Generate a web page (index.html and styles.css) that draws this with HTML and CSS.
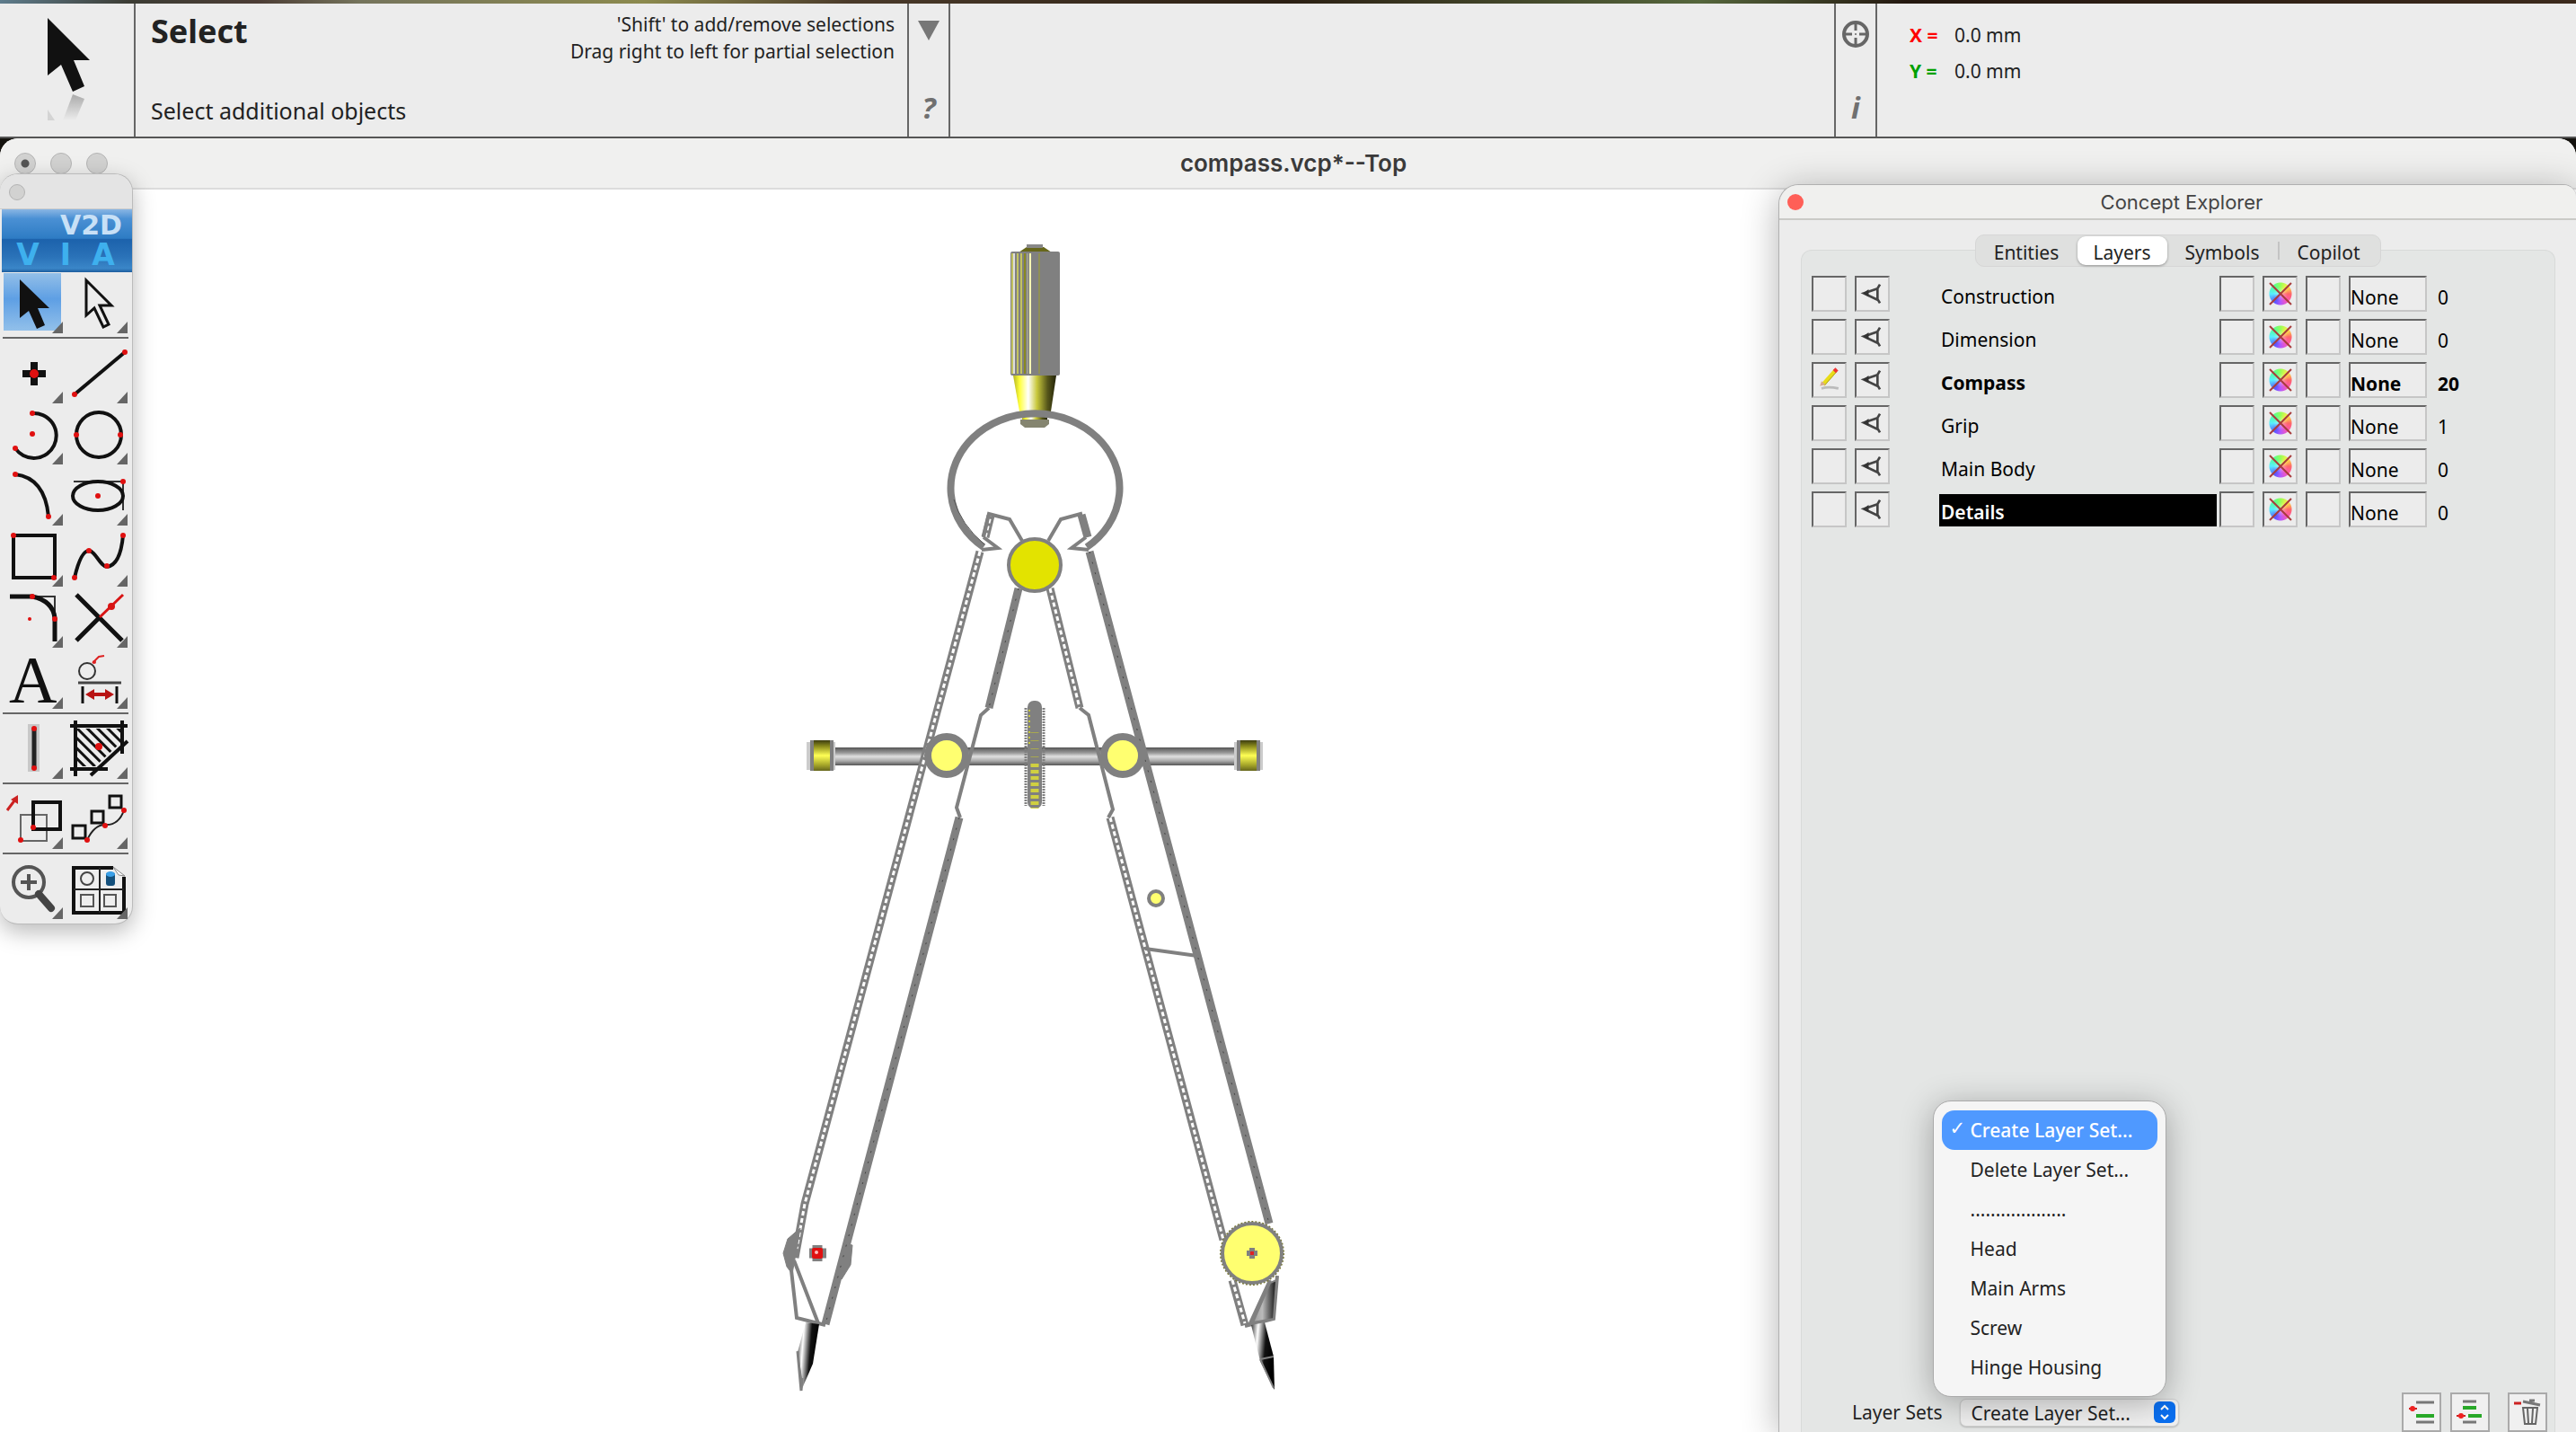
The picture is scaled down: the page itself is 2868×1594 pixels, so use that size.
FILE: index.html
```html
<!DOCTYPE html>
<html lang="en">
<head>
<meta charset="utf-8">
<title>compass.vcp*--Top</title>
<link rel="stylesheet" href="styles.css">
</head>
<body>
<svg class="defs" aria-hidden="true">
  <defs>
    <linearGradient id="ballBrass" x1="0" x2="1"><stop offset="0" stop-color="#b5b520"/><stop offset=".15" stop-color="#ffff3c"/><stop offset=".35" stop-color="#fff"/><stop offset=".55" stop-color="#c8c83c"/><stop offset=".8" stop-color="#55551a"/><stop offset="1" stop-color="#222208"/></linearGradient>
    <linearGradient id="rod" x1="0" y1="0" x2="0" y2="1"><stop offset="0" stop-color="#555"/><stop offset=".3" stop-color="#999"/><stop offset=".5" stop-color="#e0e0e0"/><stop offset=".75" stop-color="#aaa"/><stop offset="1" stop-color="#555"/></linearGradient>
    <linearGradient id="nut" x1="0" y1="0" x2="0" y2="1"><stop offset="0" stop-color="#3c3c10"/><stop offset=".2" stop-color="#8c8c1c"/><stop offset=".5" stop-color="#ffff55"/><stop offset=".8" stop-color="#a8a82a"/><stop offset="1" stop-color="#66661c"/></linearGradient>
    <linearGradient id="steel" x1="0" x2="1" y1="0" y2=".25"><stop offset="0" stop-color="#333"/><stop offset=".3" stop-color="#fff"/><stop offset=".5" stop-color="#777"/><stop offset=".65" stop-color="#111"/><stop offset="1" stop-color="#000"/></linearGradient>
    <linearGradient id="collar" x1="0" x2="1"><stop offset="0" stop-color="#999"/><stop offset=".4" stop-color="#bbb"/><stop offset="1" stop-color="#111"/></linearGradient>
    <linearGradient id="fade" x1="0" y1="0" x2="0" y2="1"><stop offset="0" stop-color="#aaa"/><stop offset="1" stop-color="#ececec"/></linearGradient>
    <linearGradient id="bluesel" x1="0" y1="0" x2="0" y2="1"><stop offset="0" stop-color="#93bfe8"/><stop offset=".45" stop-color="#5e9fe4"/><stop offset="1" stop-color="#92c0ea"/></linearGradient>
    <pattern id="hatch" width="8" height="8" patternUnits="userSpaceOnUse" patternTransform="rotate(-45)"><rect width="3" height="8" fill="#111"/></pattern>
    <symbol id="eye" viewBox="0 0 39 39"><path d="M29 8 26 13V26L29 31M26 13 9 19l17 8" fill="none" stroke="#444" stroke-width="3"/><path d="M8 19l7-5v9z" fill="#333"/></symbol>
    <symbol id="cross" viewBox="0 0 28 28"><path d="M2 2l24 24M26 2 2 26" stroke="#a83c3c" stroke-width="2" fill="none"/></symbol>
    <symbol id="more" viewBox="0 0 72 68"><path d="M70 55v13H58z" fill="#666"/></symbol>
  </defs>
</svg>

<header class="topbar">
  <div class="tool-picture">
    <svg width="150" height="148" viewBox="0 4 150 148" aria-hidden="true">
      <path d="M53 20v64l15-12 13 30 13-6-12-29h18z" fill="#111"/>
      <path d="M81 105l13 5-10 24H70z" fill="url(#fade)"/><path d="M53 122v12h8z" fill="#d4d4d4"/>
    </svg>
  </div>
  <div class="tool-info">
    <div class="tool-head">
      <h1>Select</h1>
      <p class="hints">'Shift' to add/remove selections<br>Drag right to left for partial selection</p>
    </div>
    <p class="prompt">Select additional objects</p>
  </div>
  <div class="bar-icons">
    <button aria-label="Options"><svg width="24" height="24" viewBox="0 0 24 24"><path d="M0 1h24L12 23z" fill="#777"/></svg></button>
    <button class="glyph" aria-label="Help">?</button>
  </div>
  <div class="spacer"></div>
  <div class="bar-icons">
    <button aria-label="Target"><svg width="32" height="32" viewBox="0 0 32 32"><circle cx="16" cy="16" r="13" fill="none" stroke="#666" stroke-width="4"/><path d="M16 3v9M16 20v9M3 16h9M20 16h9" stroke="#666" stroke-width="3"/><circle cx="16" cy="16" r="1" fill="#666"/></svg></button>
    <button class="glyph" aria-label="Information">i</button>
  </div>
  <dl class="coords">
    <dt class="x">X =</dt><dd>0.0 mm</dd>
    <dt class="y">Y =</dt><dd>0.0 mm</dd>
  </dl>
</header>

<main class="window">
  <div class="titlebar">
    <div class="lights"><i class="edited"></i><i></i><i></i></div>
    <h2>compass.vcp*--Top</h2>
  </div>
  <div class="canvas">
    <svg class="drawing" width="570" height="1300" viewBox="870 260 570 1300" role="img" aria-label="Compass drawing">
      <g fill="none" stroke="#808080">
        <!-- grip -->
        <g stroke="none">
          <path d="M1134 281l9-6h19l9 6z" fill="#66661a"/><rect x="1143" y="272" width="18" height="4" fill="#888"/>
          <rect x="1125" y="280" width="55" height="138" rx="2" fill="#808080"/>
          <path d="M1127 282v134M1133 282v134M1137 282v134" stroke="#c3c360" stroke-width="2"/>
          <path d="M1129 282v134" stroke="#ddd" stroke-width="2"/>
          <path d="M1141 282v134" stroke="#8a8a20" stroke-width="2"/>
          <path d="M1144 282v134" stroke="#b8b8a0"/>
          <path d="M1147 282v134" stroke="#ffffb4" stroke-width="2"/>
          <path d="M1157 282v134" stroke="#8f8f55" stroke-width="2"/>
          <path d="M1128 418h48l-6 40h-35z" fill="url(#ballBrass)"/>
          <path d="M1138 462h28v6h-28z" fill="url(#ballBrass)"/>
          <path d="M1136 467h32v5l-5 4h-22l-5-4z" fill="#858570"/>
        </g>
        <!-- ring -->
        <path d="M1095 609A94 83 0 1 1 1210 609" stroke-width="8"/>
        <path d="M1062 556q8 28 34 50" stroke="#555" stroke-width="1"/>
        <!-- spreader rod -->
        <rect x="930" y="832" width="445" height="20" fill="url(#rod)" stroke="none"/>
        <g stroke="none">
          <path d="M898 826h32v31h-32zM1374 826h32v31h-32z" fill="#ccc"/>
          <path d="M902 824h26v34h-26zM1377 824h26v34h-26z" fill="#808080"/>
          <path d="M906 824h18v34h-18z" fill="url(#nut)"/><path d="M1381 824h18v34h-18z" fill="url(#nut)"/>
        </g>
        <!-- hollow edges -->
        <g stroke-width="9"><path d="M1091 614 896 1340 885 1400M1169 655l33 133M1236 910 1362 1380M1372 1425l14 50M1097 598l6-24"/></g>
        <g stroke-width="3" stroke="#fff" stroke-dasharray="5 3"><path d="M1091 614 896 1340 887 1390M1169 655l33 133M1236 910 1362 1380M1372 1425l14 48M1097 598l6-24"/></g>
        <!-- solid edges -->
        <g stroke-width="9"><path d="M1134 655l-33 133M1068 910 919 1474M1213 614l200 748M1204 573l7 25"/></g>
        <g stroke="#444" stroke-width="1" stroke-dasharray="2 10"><path d="M1134 655l-33 133M1068 910 919 1474M1213 614l200 748"/></g>
        <g stroke-width="4">
          <path d="M1095 598l6-26 23 6 14 24M1095 598l16 12-18 2M1209 598l-6-26-22 6-14 24M1209 598l-16 12 19 2"/>
          <path d="M1101 788l-9 8-27 103 4 11M1202 788l10 8 27 105-5 9"/>
          <path d="M1275 1056l58 8"/>
          <path d="M884 1403l27 70M881 1414l6 53 32 8M1414 1425l-23 50M1422 1420l-4 48-32 8"/>
        </g>
        <path d="M891 1367l-14 12-5 16 4 15 6 8zM944 1385l5 1-2 22-10 16z" fill="#808080" stroke-width="1"/>
        <circle cx="1152" cy="629" r="29" fill="#e3e300" stroke-width="4"/>
        <g fill="#ffff70"><circle cx="1054" cy="841" r="21" stroke-width="8"/><circle cx="1250" cy="841" r="21" stroke-width="8"/>
          <circle cx="1287" cy="1000" r="8" stroke-width="4"/></g>
        <!-- thumb wheel -->
        <path d="M1142 788v109M1162 788v109" stroke-width="3" stroke-dasharray="2 1"/>
        <rect x="1144" y="780" width="16" height="120" rx="7" fill="#808080" stroke="none"/>
        <path d="M1146 790v40" stroke="#c8c83c" stroke-width="2" stroke-dasharray="2 4"/>
        <path d="M1152 815v40" stroke="#a8a850" stroke-width="9" stroke-dasharray="1 8"/>
        <path d="M1152 850v50" stroke="#d0d040" stroke-width="9" stroke-dasharray="4 3"/>
        <!-- pivots -->
        <circle cx="1394" cy="1395" r="35" stroke="#77772c" stroke-width="2" stroke-dasharray="2 2"/>
        <circle cx="1394" cy="1395" r="33" fill="#ffff70" stroke-width="4"/>
        <path d="M1388 1395h12M1394 1389v12" stroke-width="6"/><rect x="1392" y="1393" width="4" height="4" fill="#d22" stroke="none"/>
        <path d="M901 1395h19M910 1386v18" stroke-width="11"/><rect x="904" y="1389" width="12" height="12" rx="2" fill="#e01010" stroke="none"/><circle cx="909" cy="1394" r="2" fill="#fbb" stroke="none"/>
        <!-- points -->
        <path d="M1421 1425l-3 43-23 4 19-44z" fill="url(#collar)" stroke-width="2"/>
        <path d="M1393 1475l15-3 10 38 1 37-16-32z" fill="url(#steel)" stroke="none"/>
        <path d="M1403 1513l15-3M1403 1513l15 32" stroke-width="2"/>
        <path d="M897 1472l15 2-7 44-13 30-4-43z" fill="url(#steel)" stroke="none"/>
        <path d="M888 1504l4 44 1-14" fill="#808080" stroke-width="3"/>
      </g>
    </svg>
  </div>
</main>

<aside class="palette" aria-label="Tools">
  <div class="palette-bar"><i></i></div>
  <div class="logo"><div class="v2d">V2D</div><div class="via"><b>V</b><b>I</b><b>A</b></div></div>
  <div class="tools">
    <button aria-label="Select"><svg viewBox="0 0 72 68"><rect x="4" y="1" width="64" height="64" fill="url(#bluesel)"/><path d="M22 8v43l10-8 9 20 9-4-8-19h13z" fill="#111"/><use href="#more"/></svg></button>
    <button aria-label="Direct select"><svg viewBox="0 0 72 68"><path d="M24 9v39l9-8 10 21 6-3-10-21h13z" fill="none" stroke="#111" stroke-width="3"/><use href="#more"/></svg></button>
  </div>
  <hr>
  <div class="tools">
    <button aria-label="Point"><svg viewBox="0 0 72 68"><path d="M25 35h26M38 22v26" stroke="#111" stroke-width="8"/><circle cx="38" cy="35" r="5" fill="#e01010"/><use href="#more"/></svg></button>
    <button aria-label="Line"><svg viewBox="0 0 72 68"><path d="M11 58 67 11" stroke="#111" stroke-width="4"/><g fill="#e01010"><circle cx="11" cy="58" r="3"/><circle cx="67" cy="11" r="3"/></g><use href="#more"/></svg></button>
    <button aria-label="Arc"><svg viewBox="0 0 72 68"><path d="M36 11A25 25 0 1 1 17 50" fill="none" stroke="#111" stroke-width="4"/><g fill="#e01010"><circle cx="36" cy="11" r="3"/><circle cx="36" cy="34" r="3"/><circle cx="17" cy="50" r="3"/></g><use href="#more"/></svg></button>
    <button aria-label="Circle"><svg viewBox="0 0 72 68"><circle cx="38" cy="35" r="25" fill="none" stroke="#111" stroke-width="4"/><g fill="#e01010"><circle cx="13" cy="35" r="3"/><circle cx="62" cy="35" r="3"/></g><use href="#more"/></svg></button>
    <button aria-label="Quarter arc"><svg viewBox="0 0 72 68"><path d="M17 11q33 4 37 47" fill="none" stroke="#111" stroke-width="4"/><g fill="#e01010"><circle cx="17" cy="11" r="3"/><circle cx="54" cy="58" r="3"/></g><use href="#more"/></svg></button>
    <button aria-label="Ellipse"><svg viewBox="0 0 72 68"><path d="M10 19h55v32" fill="none" stroke="#333" stroke-width="2"/><ellipse cx="37" cy="35" rx="28" ry="16" fill="none" stroke="#111" stroke-width="4"/><g fill="#e01010"><circle cx="37" cy="35" r="3"/><circle cx="65" cy="19" r="3"/></g><use href="#more"/></svg></button>
    <button aria-label="Rectangle"><svg viewBox="0 0 72 68"><path d="M15 11h46v47H15z" fill="none" stroke="#111" stroke-width="4"/><g fill="#e01010"><circle cx="15" cy="11" r="3"/><circle cx="60" cy="58" r="3"/></g><use href="#more"/></svg></button>
    <button aria-label="Spline"><svg viewBox="0 0 72 68"><path d="M11 58Q18 28 27 28C34 28 40 46 47 46Q62 44 65 11" fill="none" stroke="#111" stroke-width="4"/><g fill="#e01010"><circle cx="11" cy="58" r="3"/><circle cx="27" cy="28" r="3"/><circle cx="47" cy="45" r="3"/><circle cx="65" cy="11" r="3"/></g><use href="#more"/></svg></button>
    <button aria-label="Fillet"><svg viewBox="0 0 72 68"><path d="M36 11h25v24" fill="none" stroke="#333" stroke-width="2"/><path d="M11 11h25q23 5 25 24v26" fill="none" stroke="#111" stroke-width="5"/><g fill="#e01010"><circle cx="36" cy="11" r="3"/><circle cx="33" cy="36" r="2"/><circle cx="61" cy="36" r="3"/></g><use href="#more"/></svg></button>
    <button aria-label="Trim"><svg viewBox="0 0 72 68"><path d="M13 9 64 60M13 60 38 35" stroke="#111" stroke-width="5"/><path d="M39 34 65 9" stroke="#d81414" stroke-width="3"/><circle cx="52" cy="22" r="4" fill="#d81414"/><use href="#more"/></svg></button>
    <button aria-label="Text"><svg viewBox="0 0 72 68"><text x="10" y="61" class="letter">A</text><use href="#more"/></svg></button>
    <button aria-label="Dimension"><svg viewBox="0 0 72 68"><circle cx="25" cy="26" r="9" fill="none" stroke="#333" stroke-width="2"/><path d="M31 17l7-7 6-1" fill="none" stroke="#d22" stroke-width="2"/><circle cx="33" cy="16" r="2" fill="#d22"/><path d="M15 39h48" stroke="#444" stroke-width="3"/><path d="M20 43v19M58 43v19" stroke="#111" stroke-width="3"/><path d="M23 52l10-6v4h12v-4l10 6-10 6v-4H33v4z" fill="#b81414"/><use href="#more"/></svg></button>
  </div>
  <hr>
  <div class="tools">
    <button aria-label="Thick line"><svg viewBox="0 0 72 68"><rect x="31" y="7" width="13" height="53" fill="#c8c8c8"/><path d="M38 12v44" stroke="#222" stroke-width="5"/><g fill="#e01010"><circle cx="38" cy="12" r="3"/><circle cx="38" cy="56" r="3"/></g><use href="#more"/></svg></button>
    <button aria-label="Hatch"><svg viewBox="0 0 72 68"><path d="M14 12h48v16L34 54H14z" fill="url(#hatch)"/><path d="M6 9h64M12 3v62M64 3v37M6 57h42M29 64 70 26" stroke="#111" stroke-width="4"/><circle cx="38" cy="32" r="4" fill="#e01010"/><use href="#more"/></svg></button>
  </div>
  <hr>
  <div class="tools">
    <button aria-label="Copy"><svg viewBox="0 0 72 68"><path d="M23 30h29v29H23z" fill="none" stroke="#666" stroke-width="2"/><path d="M37 16h30v30H37z" fill="none" stroke="#111" stroke-width="4"/><path d="M8 25 17 13" stroke="#c22" stroke-width="3"/><path d="M12 13l8-5v10z" fill="#c22"/><g fill="#e01010"><circle cx="37" cy="44" r="3"/><circle cx="23" cy="58" r="3"/></g><use href="#more"/></svg></button>
    <button aria-label="Copy along path"><svg viewBox="0 0 72 68"><path d="M25 58Q33 41 45 41Q60 42 66 25" fill="none" stroke="#222" stroke-width="2"/><path d="M9 42h14v14H9zM30 26h13v13H30zM50 9h13v13H50z" fill="none" stroke="#111" stroke-width="3"/><g fill="#e01010"><circle cx="25" cy="58" r="3"/><circle cx="45" cy="42" r="3"/><circle cx="66" cy="25" r="3"/></g><use href="#more"/></svg></button>
  </div>
  <hr>
  <div class="tools">
    <button aria-label="Zoom"><svg viewBox="0 0 72 68"><circle cx="32" cy="27" r="17" fill="none" stroke="#555" stroke-width="4"/><path d="M23 27h18M32 18v18" stroke="#555" stroke-width="4"/><path d="M43 40 57 56" stroke="#444" stroke-width="8" stroke-linecap="round"/><use href="#more"/></svg></button>
    <button aria-label="Symbols"><svg viewBox="0 0 72 68"><path d="M54 11H10v50h56V21" fill="#eee" stroke="#111" stroke-width="4"/><path d="M54 10l13 10-7-1z" fill="#fff" stroke="#888" stroke-width="1"/><path d="M39 11v50M10 35h56" stroke="#222" stroke-width="2"/><circle cx="25" cy="23" r="7" fill="none" stroke="#444" stroke-width="2"/><rect x="46" y="16" width="10" height="15" rx="3" fill="#14507c"/><ellipse cx="51" cy="18" rx="5" ry="3" fill="#3aa0e8"/><path d="M18 41h14v13H18zM44 41h13v13H44z" fill="none" stroke="#555" stroke-width="2"/><use href="#more"/></svg></button>
  </div>
</aside>

<section class="explorer" aria-label="Concept Explorer">
  <div class="explorer-bar"><button class="close" aria-label="Close"></button><h2>Concept Explorer</h2></div>
  <nav class="tabs" role="tablist">
    <button role="tab">Entities</button><button role="tab" class="active" aria-selected="true">Layers</button><button role="tab">Symbols</button><button role="tab" class="divided">Copilot</button>
  </nav>
  <div class="group">
    <table class="layers">
      <colgroup><col class="c"><col class="c"><col class="n"><col class="c"><col class="c"><col class="c"><col class="s"><col></colgroup>
      <tbody>
      <tr><td><button class="cell" aria-label="Active"></button></td><td><button class="cell" aria-label="Visible"><svg><use href="#eye"/></svg></button></td><td class="name"><span>Construction</span></td><td><button class="cell" aria-label="Lock"></button></td><td><button class="cell" aria-label="Color"><svg class="wheel"><use href="#cross"/></svg></button></td><td><button class="cell" aria-label="Pattern"></button></td><td><button class="cell style">None</button></td><td class="count">0</td></tr>
      <tr><td><button class="cell" aria-label="Active"></button></td><td><button class="cell" aria-label="Visible"><svg><use href="#eye"/></svg></button></td><td class="name"><span>Dimension</span></td><td><button class="cell" aria-label="Lock"></button></td><td><button class="cell" aria-label="Color"><svg class="wheel"><use href="#cross"/></svg></button></td><td><button class="cell" aria-label="Pattern"></button></td><td><button class="cell style">None</button></td><td class="count">0</td></tr>
      <tr class="current"><td><button class="cell" aria-label="Active"><svg viewBox="0 0 39 39"><path d="M10 30q8-3 21 0" stroke="#bbb" stroke-width="3" fill="none"/><path d="M12 25 27 8" stroke="#e8dc18" stroke-width="5"/><path d="M14 26 28 10" stroke="#a89a20" stroke-width="1"/><path d="M26 9l3-3" stroke="#e33" stroke-width="5"/><path d="M8 27l2-6 5 4z" fill="#d8a890"/></svg></button></td><td><button class="cell" aria-label="Visible"><svg><use href="#eye"/></svg></button></td><td class="name"><span>Compass</span></td><td><button class="cell" aria-label="Lock"></button></td><td><button class="cell" aria-label="Color"><svg class="wheel"><use href="#cross"/></svg></button></td><td><button class="cell" aria-label="Pattern"></button></td><td><button class="cell style">None</button></td><td class="count">20</td></tr>
      <tr><td><button class="cell" aria-label="Active"></button></td><td><button class="cell" aria-label="Visible"><svg><use href="#eye"/></svg></button></td><td class="name"><span>Grip</span></td><td><button class="cell" aria-label="Lock"></button></td><td><button class="cell" aria-label="Color"><svg class="wheel"><use href="#cross"/></svg></button></td><td><button class="cell" aria-label="Pattern"></button></td><td><button class="cell style">None</button></td><td class="count">1</td></tr>
      <tr><td><button class="cell" aria-label="Active"></button></td><td><button class="cell" aria-label="Visible"><svg><use href="#eye"/></svg></button></td><td class="name"><span>Main Body</span></td><td><button class="cell" aria-label="Lock"></button></td><td><button class="cell" aria-label="Color"><svg class="wheel"><use href="#cross"/></svg></button></td><td><button class="cell" aria-label="Pattern"></button></td><td><button class="cell style">None</button></td><td class="count">0</td></tr>
      <tr class="selected"><td><button class="cell" aria-label="Active"></button></td><td><button class="cell" aria-label="Visible"><svg><use href="#eye"/></svg></button></td><td class="name"><span>Details</span></td><td><button class="cell" aria-label="Lock"></button></td><td><button class="cell" aria-label="Color"><svg class="wheel"><use href="#cross"/></svg></button></td><td><button class="cell" aria-label="Pattern"></button></td><td><button class="cell style">None</button></td><td class="count">0</td></tr>
      </tbody>
    </table>
    <footer class="sets">
      <label for="layer-set">Layer Sets</label>
      <div class="picker">
        <select id="layer-set"><option>Create Layer Set...</option><option>Delete Layer Set...</option><option>Head</option><option>Main Arms</option><option>Screw</option><option>Hinge Housing</option></select>
        <svg class="arrows" width="24" height="24" viewBox="0 0 24 24" aria-hidden="true"><rect width="24" height="24" rx="6" fill="#0a6ff0"/><path d="M8 9l4-4 4 4M8 15l4 4 4-4" fill="none" stroke="#fff" stroke-width="2"/></svg>
        <ul class="menu">
          <li class="chosen"><button>Create Layer Set...</button></li><li><button>Delete Layer Set...</button></li><li><button>...................</button></li><li><button>Head</button></li><li><button>Main Arms</button></li><li><button>Screw</button></li><li><button>Hinge Housing</button></li>
        </ul>
      </div>
      <div class="actions">
        <button aria-label="New layer"><svg viewBox="0 0 40 40"><path d="M14 9h20M14 31h20" stroke="#777" stroke-width="3"/><path d="M14 24h20" stroke="#28a828" stroke-width="4"/><path d="M6 16h9" stroke="#c22" stroke-width="2"/><circle cx="10" cy="16" r="3" fill="#e22"/></svg></button>
        <button aria-label="New sublayer"><svg viewBox="0 0 40 40"><path d="M12 8h15M12 31h15" stroke="#777" stroke-width="3"/><path d="M12 15h15M18 24h15" stroke="#28a828" stroke-width="4"/><path d="M5 24h10" stroke="#c22" stroke-width="2"/><circle cx="10" cy="24" r="3" fill="#e22"/></svg></button>
        <button aria-label="Delete layer"><svg viewBox="0 0 40 40"><path d="M5 10h8" stroke="#c22" stroke-width="3"/><path d="M15 8l19 4M22 7l6 0" stroke="#777" stroke-width="3"/><path d="M15 15h16l-2 18H17zM20 16l1 16M26 16l-1 16" fill="none" stroke="#666" stroke-width="2"/></svg></button>
      </div>
    </footer>
  </div>
</section>
</body>
</html>
```
FILE: styles.css
```css
* { box-sizing: border-box; }
body {
  margin: 0;
  height: 100vh;
  overflow: hidden;
  display: flex;
  flex-direction: column;
  position: relative;
  padding-top: 4px;
  background: #14120e linear-gradient(90deg, #5e7c8c 0, #3c3c34 5%, #4c3d35 10%, #75745c 14%, #8c8a4e 25%, #4a3a2a 33%, #2c2014 50%, #55663c 66%, #241810 74%, #3c2a1c 100%) 0 0 / 100% 4px no-repeat;
  font-family: "Noto Sans", "Open Sans", sans-serif;
  font-size: 21px;
  color: #222;
}
h1, h2, p, dl, dd, ul { margin: 0; padding: 0; }
button { font: inherit; color: inherit; border: 0; padding: 0; background: none; }
svg { display: block; }
.defs { position: absolute; width: 0; height: 0; }

/* top information bar */
.topbar {
  display: flex;
  flex: none;
  height: 150px;
  background: #ececec;
  border-bottom: 2px solid #555;
}
.tool-picture { width: 151px; border-right: 2px solid #666; }
.tool-info {
  width: 861px;
  padding: 8px 14px 12px 17px;
  display: flex;
  flex-direction: column;
  justify-content: space-between;
  border-right: 2px solid #666;
}
.tool-head { display: flex; justify-content: space-between; }
.tool-head h1 { font-size: 36px; line-height: 46px; }
.hints { text-align: right; line-height: 30px; }
.prompt { font-size: 25px; line-height: 34px; }
.bar-icons {
  width: 46px;
  display: flex;
  flex-direction: column;
  align-items: center;
  justify-content: space-between;
  padding: 18px 0 12px;
  border-right: 2px solid #666;
}
.glyph { font: italic bold 33px/40px "Open Sans", sans-serif; color: #707070; }
.spacer { flex: 1; border-right: 2px solid #666; }
.coords {
  width: 778px;
  display: grid;
  grid-template-columns: 50px 1fr;
  grid-auto-rows: 40px;
  line-height: 40px;
  padding: 15px 0 0 36px;
}
.coords dt { font-weight: bold; }
.x { color: red; }
.y { color: #00a000; }

/* document window */
.window {
  flex: 1;
  min-height: 0;
  display: flex;
  flex-direction: column;
  background: #fff;
  border-radius: 20px 20px 0 0;
}
.titlebar {
  flex: none;
  height: 57px;
  display: grid;
  grid-template-columns: 156px 1fr 144px;
  align-items: center;
  background: #f0f0ef;
  border-bottom: 2px solid #dcdcdc;
  border-radius: 20px 20px 0 0;
}
.titlebar h2 { text-align: center; font: 600 26px/32px Inter, sans-serif; color: #3a3a3a; }
.lights { display: flex; gap: 16px; padding-left: 16px; }
.lights i, .palette-bar i {
  width: 24px;
  height: 24px;
  border-radius: 50%;
  background: #d2d2d1;
  border: 1px solid #b4b4b4;
}
.lights .edited { background: radial-gradient(circle, #555 4px, #d2d2d1 5px); }
.canvas { flex: 1; min-height: 0; padding-top: 49px; }
.drawing { margin-left: 870px; }

/* tool palette */
.palette {
  position: absolute;
  left: 0;
  top: 193px;
  width: 148px;
  padding-bottom: 5px;
  background: #ececec;
  border: 1px solid #bbb;
  border-left: 0;
  border-radius: 20px;
  box-shadow: 0 8px 26px rgba(0, 0, 0, .28);
}
.palette-bar { height: 39px; padding: 11px 0 0 10px; background: #e4e4e4; border-radius: 20px 20px 0 0; border-bottom: 1px solid #ccc; }
.palette-bar i { display: block; width: 18px; height: 18px; }
.logo {
  height: 70px;
  margin: 0 0 0 2px;
  background: linear-gradient(#8ab6e4 0, #4a90d4 15%, #2e7cc4 46%, #1c62ac 48%, #2a72b8 75%, #3a86c8 94%, #1c5c9c 100%);
  font-family: "DejaVu Sans", sans-serif;
  font-weight: bold;
}
.v2d { height: 34px; padding-right: 11px; text-align: right; font-size: 30px; line-height: 36px; color: #c8e0f6; }
.via { display: grid; grid-template-columns: 58px 26px 58px; text-align: center; font-size: 33px; line-height: 34px; color: #3eb0ee; }
.tools { display: grid; grid-template-columns: 72px 72px; }
.tools svg { width: 72px; height: 68px; overflow: visible; }
.letter { font: 74px "Liberation Serif", serif; fill: #111; }
.palette hr { margin: 4px 4px 4px 3px; border: 0; height: 2px; background: #666; }

/* floating explorer */
.explorer {
  position: absolute;
  top: 205px;
  right: 0;
  bottom: 0;
  width: 888px;
  display: flex;
  flex-direction: column;
  background: #ececec;
  border: 1px solid #b0b0b0;
  border-width: 1px 0 0 1px;
  border-radius: 22px 14px 0 0;
  box-shadow: 0 6px 40px rgba(0, 0, 0, .3);
}
.explorer-bar {
  flex: none;
  height: 39px;
  display: flex;
  align-items: center;
  padding: 0 0 0 9px;
  background: #f0f0ee;
  border-bottom: 2px solid #cacac6;
  border-radius: 22px 14px 0 0;
}
.close { width: 18px; height: 18px; border-radius: 50%; background: #ff5f57; }
.explorer-bar h2 { flex: 1; padding-right: 18px; text-align: center; font: 400 22px/28px Inter, sans-serif; color: #444; }
.tabs {
  position: relative;
  flex: none;
  align-self: center;
  display: grid;
  grid-template-columns: 113px 100px 123px 114px;
  margin: 16px 0 -19px 0;
  height: 36px;
  padding: 1px 0;
  background: #dfe0df;
  border: 1px solid #d6d6d6;
  border-radius: 10px;
  z-index: 1;
}
.tabs button { padding-top: 3px; line-height: 28px; }
.tabs .active { background: #fff; border-radius: 9px; box-shadow: 0 1px 3px rgba(0, 0, 0, .35); }
.tabs .divided { background: linear-gradient(#c4c4c4, #c4c4c4) 0 6px / 2px 20px no-repeat; }
.group {
  flex: 1;
  display: flex;
  flex-direction: column;
  justify-content: space-between;
  margin: 0 23px 0 24px;
  padding: 28px 8px 0 11px;
  background: #e4e6e5;
  border: 1px solid #d8dad9;
  border-bottom: 0;
  border-radius: 12px 12px 0 0;
}
.layers { width: 100%; border-collapse: collapse; table-layout: fixed; color: #000; }
.layers tr { height: 48px; }
.layers td { padding: 0; vertical-align: top; }
.layers .c { width: 48px; }
.layers .n { width: 358px; }
.layers .s { width: 99px; }
.cell {
  display: block;
  width: 39px;
  height: 40px;
  background: #ececec;
  border: 2px solid;
  border-color: #666 #c6c6c6 #c6c6c6 #666;
}
.cell svg { width: 35px; height: 36px; }
.cell .wheel {
  width: 28px;
  height: 28px;
  margin: 0 auto;
  background: radial-gradient(circle, rgba(255, 255, 255, .5), rgba(255, 255, 255, .1) 8px 12px, #ececec 13px), conic-gradient(#8f4, #fe3 45deg, #f55 90deg, #f4a 135deg, #a4f 180deg, #44f 215deg, #4ef 270deg, #4f8 320deg, #8f4);
}
.style { width: 87px; text-align: left; padding-top: 8px; line-height: 28px; }
.name span { display: block; height: 36px; margin: 3px 3px 0 46px; padding: 6px 2px 0; line-height: 28px; }
.count { line-height: 28px; }
.layers .count { padding-top: 10px; }
.current { font-weight: bold; }
.selected .name span { background: #000; color: #fff; font-weight: 600; }

.sets { display: flex; align-items: center; height: 45px; padding-left: 45px; }
.picker { position: relative; margin: 2px 0 0 19px; }
.picker select {
  appearance: none;
  display: block;
  width: 244px;
  height: 31px;
  padding: 0 0 0 12px;
  font: inherit;
  line-height: 28px;
  color: #222;
  background: #f0f0f0;
  border: 1px solid #d0d0d0;
  border-radius: 7px;
  box-shadow: 0 1px 2px rgba(0, 0, 0, .2);
}
.arrows { position: absolute; right: 4px; top: 3px; }
.menu {
  position: absolute;
  left: -30px;
  bottom: 33px;
  width: 260px;
  padding: 10px 9px;
  list-style: none;
  background: #f5f5f5;
  border: 1px solid #aaa;
  border-radius: 20px;
  box-shadow: 0 6px 36px rgba(0, 0, 0, .3);
}
.menu button { display: block; width: 100%; height: 44px; padding-left: 32px; text-align: left; border-radius: 14px; }
.menu .chosen button { position: relative; background: #4f99ff; color: #fff; font-weight: 500; }
.menu .chosen button::before { content: "✓"; position: absolute; left: 9px; font-family: "DejaVu Sans", sans-serif; }
.actions { display: flex; gap: 10px; margin-left: auto; }
.actions button { width: 44px; height: 44px; border: 2px solid #aaa; background: #f0f0f0; }
.actions button:last-child { margin-left: 10px; }
```
